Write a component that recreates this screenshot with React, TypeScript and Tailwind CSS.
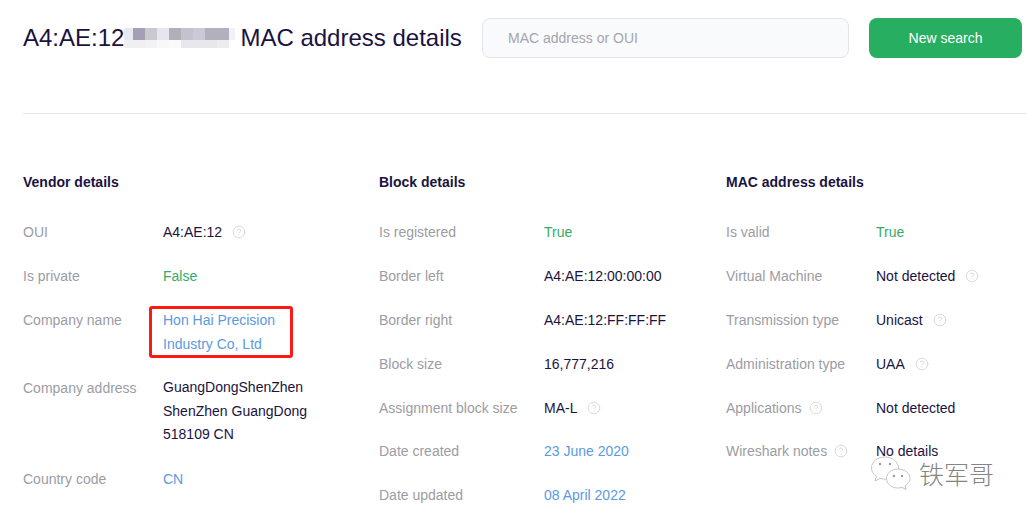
import React from 'react';
import { CircleHelp } from 'lucide-react';

const Help: React.FC = () => <CircleHelp size={14} strokeWidth={1.7} className="text-[#d9dadd] shrink-0" />;

type Row = {
  label: string;
  value: React.ReactNode;
  tone?: 'dark' | 'green' | 'blue';
  help?: 'label' | 'value';
  tight?: boolean;
};

const tones = {
  dark: 'text-[#1b1340]',
  green: 'text-[#36ab68]',
  blue: 'text-[#5b9ae0]',
};

const DetailColumn: React.FC<{ title: string; labelWidth: string; rows: Row[] }> = ({ title, labelWidth, rows }) => (
  <div>
    <h2 className="text-sm font-bold leading-6 text-[#1b1340] mb-[26px]">{title}</h2>
    <div className="flex flex-col gap-5">
      {rows.map((row) => (
        <div key={row.label} className={`flex text-sm leading-6 ${row.tight ? '-mb-px' : ''}`}>
          <div className={`${labelWidth} shrink-0 flex items-center gap-[7px] h-6 text-[#9c9ca3]`}>
            {row.label}
            {row.help === 'label' && <Help />}
          </div>
          <div className={`relative ${tones[row.tone || 'dark']}`}>
            <div className="flex items-center gap-[10px]">
              <div>{row.value}</div>
              {row.help === 'value' && <Help />}
            </div>
          </div>
        </div>
      ))}
    </div>
  </div>
);

const CompanyName: React.FC = () => (
  <>
    <span className="block whitespace-nowrap">Hon Hai Precision</span>
    <span className="block whitespace-nowrap">Industry Co, Ltd</span>
    <div className="absolute left-[-14px] top-[-2px] w-[144px] h-[52px] border-[3px] border-[#fb1b14] rounded-[3px]" />
  </>
);

const mosaicTop = ['bg-[#a59eb5]', 'bg-[#cbc8d1]', 'bg-[#e6e6ec]', 'bg-[#b3aeb7]', 'bg-[#c5c2cf]', 'bg-[#cbc9d5]', 'bg-[#b3b0be]', 'bg-[#b3b0be]'];
const mosaicBottom = ['bg-[#f0f0f2]', 'bg-[#f3f3f5]', 'bg-[#f8f8f9]', 'bg-[#fafafa]', 'bg-[#e8e8ec]', 'bg-[#e8e8ec]', 'bg-[#e8e8ec]', 'bg-[#ececef]'];

const Mosaic: React.FC = () => (
  <div className="flex flex-col">
    <div className="flex h-3">
      <div className="w-[9px] bg-[#e6e9f0]" />
      {mosaicTop.map((c, i) => (
        <div key={i} className={`w-3 ${c}`} />
      ))}
      <div className="w-[6px] bg-[#f2f2f4]" />
    </div>
    <div className="flex h-2">
      <div className="w-[9px] bg-[#f0f0f2]" />
      {mosaicBottom.map((c, i) => (
        <div key={i} className={`w-3 ${c}`} />
      ))}
    </div>
  </div>
);

const Watermark: React.FC = () => (
  <div className="absolute left-[870px] top-[456px] flex items-center gap-2">
    <svg width="41" height="34" viewBox="0 0 41 34" fill="white" stroke="#b5b5b5" strokeWidth="0.8">
      <path d="M15 1C7.5 1 1.5 5.800 1.500 12c0 3.500 2 6.500 5 8.500L5 25l5-2.600c1.600.4 3.200.7 5 .7 7.500 0 13.500-5 13.500-11S22.500 1 15 1z" />
      <path d="M28 13c-6.500 0-11.500 4.300-11.500 9.500S21.500 32 28 32c1.400 0 2.700-.2 4-.6l4 2.100-1-3.600c3-1.800 5-4.600 5-7.400C40 17.300 34.500 13 28 13z" />
      <circle cx="10" cy="8" r="1.200" fill="#9a9a9a" stroke="none" />
      <circle cx="20" cy="8" r="1.200" fill="#9a9a9a" stroke="none" />
      <circle cx="24" cy="20" r="1.200" fill="#9a9a9a" stroke="none" />
      <circle cx="32" cy="20" r="1.200" fill="#9a9a9a" stroke="none" />
    </svg>
    <span className="text-[25px] leading-none text-[#858585] font-['Noto_Sans_CJK_SC',sans-serif] font-light">铁军哥</span>
  </div>
);

const vendorRows: Row[] = [
  { label: 'OUI', value: 'A4:AE:12', help: 'value' },
  { label: 'Is private', value: 'False', tone: 'green' },
  { label: 'Company name', value: <CompanyName />, tone: 'blue' },
  {
    label: 'Company address',
    value: (
      <div className="leading-[23.5px]">
        GuangDongShenZhen
        <br />
        ShenZhen GuangDong
        <br />
        518109 CN
      </div>
    ),
  },
  { label: 'Country code', value: 'CN', tone: 'blue' },
];

const blockRows: Row[] = [
  { label: 'Is registered', value: 'True', tone: 'green' },
  { label: 'Border left', value: 'A4:AE:12:00:00:00' },
  { label: 'Border right', value: 'A4:AE:12:FF:FF:FF' },
  { label: 'Block size', value: '16,777,216' },
  { label: 'Assignment block size', value: 'MA-L', help: 'value', tight: true },
  { label: 'Date created', value: '23 June 2020', tone: 'blue' },
  { label: 'Date updated', value: '08 April 2022', tone: 'blue' },
];

const macRows: Row[] = [
  { label: 'Is valid', value: 'True', tone: 'green' },
  { label: 'Virtual Machine', value: 'Not detected', help: 'value' },
  { label: 'Transmission type', value: 'Unicast', help: 'value' },
  { label: 'Administration type', value: 'UAA', help: 'value' },
  { label: 'Applications', value: 'Not detected', help: 'label', tight: true },
  { label: 'Wireshark notes', value: 'No details', help: 'label' },
];

export default function App() {
  return (
    <div className="relative h-[519px] w-[1026px] overflow-hidden bg-white pl-[23px] pr-1 pt-[18px] font-['Liberation_Sans',Arial,sans-serif]">
      <header className="flex items-center h-10">
        <h1 className="flex items-center text-2xl text-[#1b1340] whitespace-nowrap w-[459px] shrink-0">
          A4:AE:12
          <Mosaic />
          <span className="ml-[5px]">MAC address details</span>
        </h1>
        <div className="w-[367px] h-10 shrink-0 rounded-lg border border-[#e3e5ea] bg-[#f9fafc] pl-[25px] flex items-center text-sm text-[#a5a5ad]">
          MAC address or OUI
        </div>
        <button className="ml-5 w-[153px] h-10 rounded-lg bg-[#27ae60] text-sm text-white">New search</button>
      </header>
      <div className="mt-[55px] mr-[-4px] border-t border-[#e5e5e8]" />
      <main className="mt-14 grid grid-cols-[356px_347px_1fr]">
        <DetailColumn title="Vendor details" labelWidth="w-[140px]" rows={vendorRows} />
        <DetailColumn title="Block details" labelWidth="w-[165px]" rows={blockRows} />
        <DetailColumn title="MAC address details" labelWidth="w-[150px]" rows={macRows} />
      </main>
      <Watermark />
    </div>
  );
}
